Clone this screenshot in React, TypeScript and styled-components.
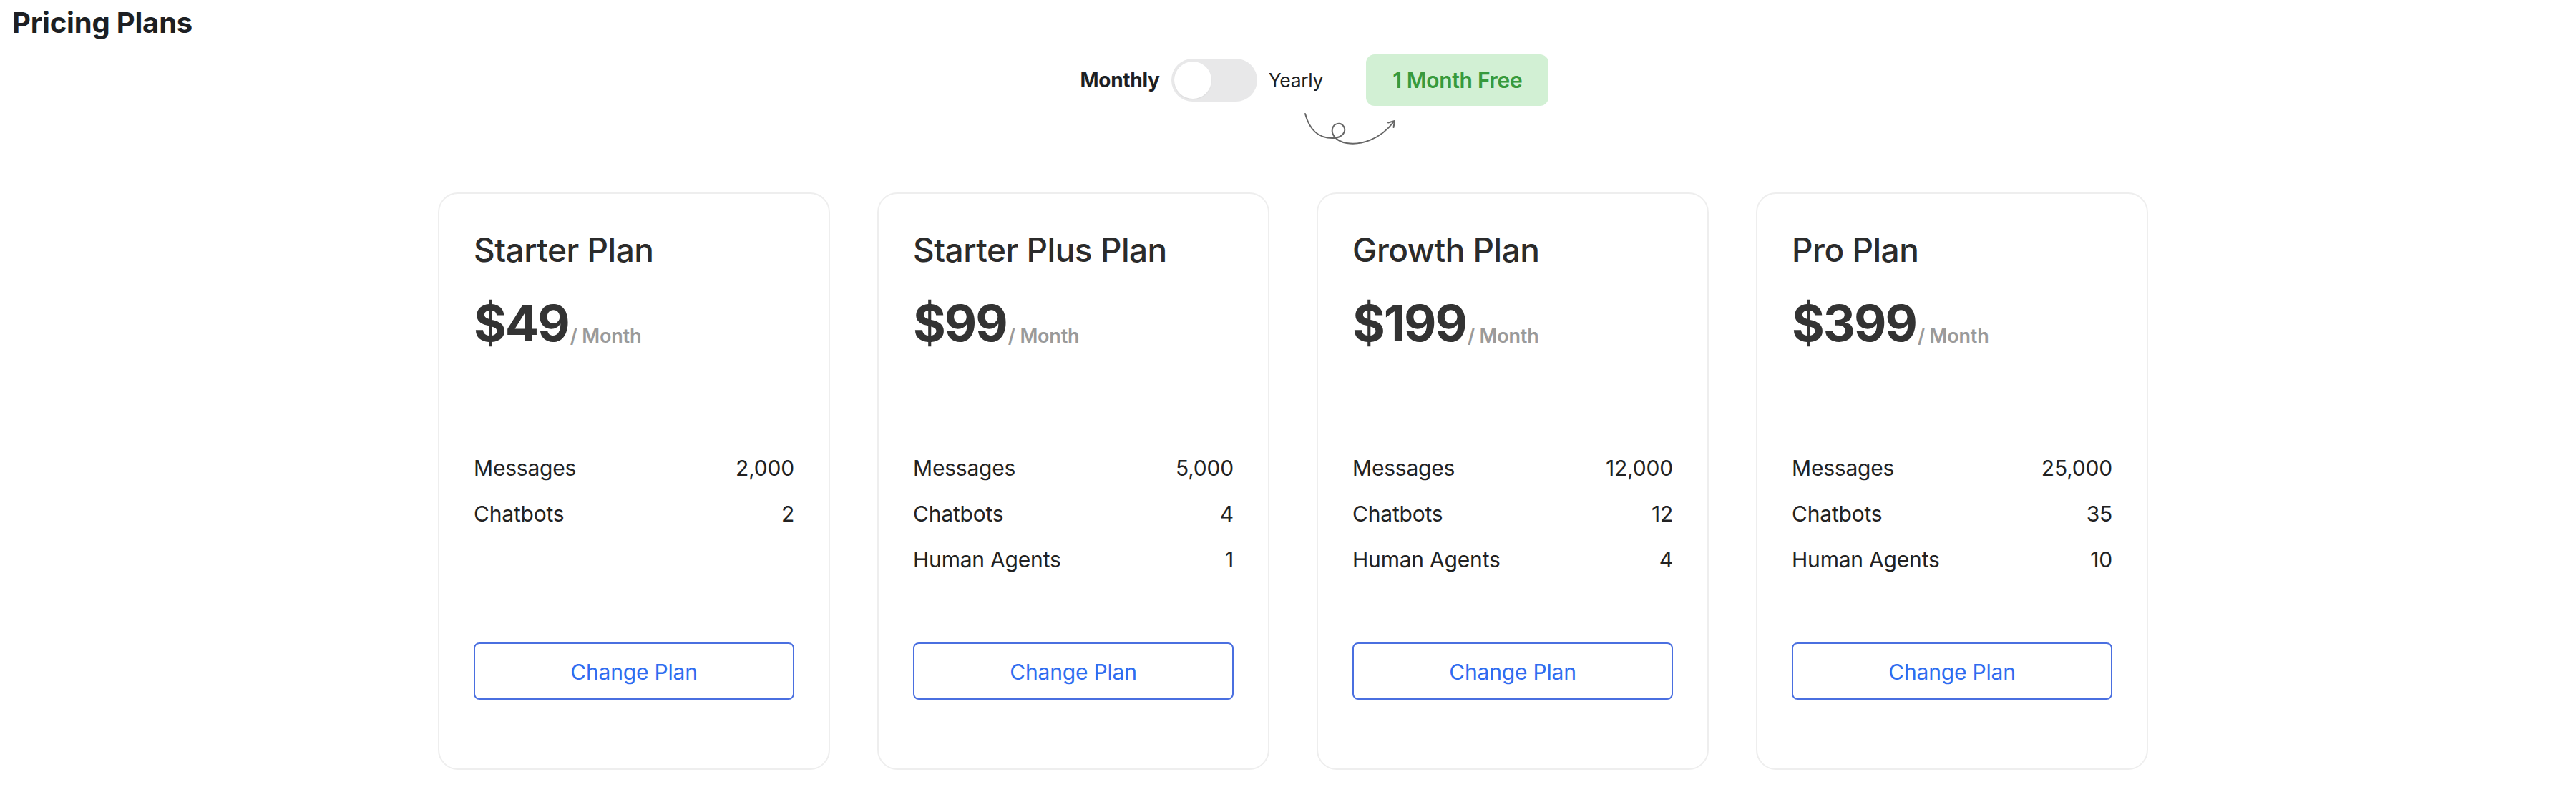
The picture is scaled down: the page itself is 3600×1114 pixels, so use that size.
import React from "react";
import styled, { createGlobalStyle } from "styled-components";

const GlobalStyle = createGlobalStyle`
  html, body {
    margin: 0;
    padding: 0;
    background: #ffffff;
    font-family: Inter, "Noto Sans", "Liberation Sans", sans-serif;
    color: #222222;
  }
  * { box-sizing: border-box; }
`;

const Page = styled.div`
  padding-top: 8px;
  width: 3600px;
`;

const Heading = styled.h1`
  margin: 0;
  padding-left: 17px;
  font-size: 40px;
  line-height: 48px;
  font-weight: 700;
  color: #1d1f23;
  letter-spacing: -0.2px;
`;

const BillingRow = styled.div`
  margin-top: 20px;
  display: flex;
  justify-content: center;
  padding-left: 74px;
`;

const BillingGroup = styled.div`
  position: relative;
  display: flex;
  align-items: center;
  height: 72px;
`;

const Label = styled.span<{ $active?: boolean }>`
  font-size: ${(p) => (p.$active ? "28px" : "26.5px")};
  font-weight: ${(p) => (p.$active ? 700 : 400)};
  color: #1d1f23;
  letter-spacing: ${(p) => (p.$active ? "-0.3px" : "-0.3px")};
`;

const Track = styled.button`
  width: 120px;
  height: 60px;
  margin: 0 16px;
  border: none;
  border-radius: 30px;
  background: #e8e8e9;
  padding: 4px;
  display: flex;
  align-items: center;
  cursor: pointer;
`;

const Knob = styled.span`
  width: 52px;
  height: 52px;
  border-radius: 50%;
  background: #ffffff;
  box-shadow: 0 1px 2px rgba(0, 0, 0, 0.06);
`;

const Badge = styled.div`
  margin-left: 60px;
  height: 72px;
  padding: 0 37px;
  border-radius: 12px;
  background: #d2f0d4;
  color: #379a3d;
  font-size: 30px;
  font-weight: 600;
  display: flex;
  align-items: center;
  letter-spacing: -0.3px;
`;

const Doodle = styled.svg`
  position: absolute;
  left: 306px;
  top: 76px;
  width: 140px;
  height: 56px;
  overflow: visible;
`;

const CardsRow = styled.div`
  margin-top: 121px;
  display: flex;
  justify-content: center;
  gap: 66px;
  padding-left: 14px;
`;

const Card = styled.div`
  width: 548px;
  height: 807px;
  border: 2px solid #eeeeee;
  border-radius: 28px;
  padding: 50px 48px 96px;
  display: flex;
  flex-direction: column;
  background: #ffffff;
`;

const PlanName = styled.h2`
  margin: 0;
  font-size: 46px;
  line-height: 56px;
  font-weight: 500;
  color: #2b2b2b;
  letter-spacing: -0.5px;
`;

const PriceLine = styled.div`
  margin-top: 33px;
  display: flex;
  align-items: baseline;
  height: 84px;
`;

const Price = styled.span`
  font-size: 70px;
  line-height: 84px;
  font-weight: 700;
  color: #333333;
  letter-spacing: -2px;
`;

const Period = styled.span`
  margin-left: 2px;
  font-size: 27px;
  font-weight: 600;
  color: #9a9a9a;
  letter-spacing: -0.2px;
  position: relative;
  top: 2px;
`;

const Features = styled.div`
  margin-top: 128px;
  min-height: 192px;
  display: flex;
  flex-direction: column;
`;

const FeatureRow = styled.div`
  height: 64px;
  display: flex;
  align-items: center;
  justify-content: space-between;
  font-size: 30px;
  color: #222222;
  letter-spacing: -0.2px;
`;

const ChangeButton = styled.button`
  margin-top: 84px;
  height: 80px;
  width: 100%;
  border: 2px solid #4a6fe0;
  border-radius: 8px;
  background: #ffffff;
  color: #2f6cf0;
  font-family: inherit;
  font-size: 30px;
  font-weight: 400;
  letter-spacing: -0.2px;
  padding-top: 3px;
  cursor: pointer;
`;

type Plan = {
  name: string;
  price: string;
  features: [string, string][];
};

const plans: Plan[] = [
  {
    name: "Starter Plan",
    price: "$49",
    features: [
      ["Messages", "2,000"],
      ["Chatbots", "2"],
    ],
  },
  {
    name: "Starter Plus Plan",
    price: "$99",
    features: [
      ["Messages", "5,000"],
      ["Chatbots", "4"],
      ["Human Agents", "1"],
    ],
  },
  {
    name: "Growth Plan",
    price: "$199",
    features: [
      ["Messages", "12,000"],
      ["Chatbots", "12"],
      ["Human Agents", "4"],
    ],
  },
  {
    name: "Pro Plan",
    price: "$399",
    features: [
      ["Messages", "25,000"],
      ["Chatbots", "35"],
      ["Human Agents", "10"],
    ],
  },
];

export default function App() {
  return (
    <Page>
      <GlobalStyle />
      <Heading>Pricing Plans</Heading>
      <BillingRow>
        <BillingGroup>
          <Label $active>Monthly</Label>
          <Track aria-label="Toggle billing period">
            <Knob />
          </Track>
          <Label>Yearly</Label>
          <Badge>1 Month Free</Badge>
          <Doodle viewBox="0 0 140 56" fill="none">
            <path
              d="M8 7 C14 30 28 42 48 41 C60 40 66 32 62 25 C58 18 48 20 46 28 C44 36 52 46 66 48 C85 51 112 44 132 18"
              stroke="#666666"
              strokeWidth="2"
              strokeLinecap="round"
              strokeLinejoin="round"
            />
            <path
              d="M124 19.5 L133 17 L131.5 26"
              stroke="#666666"
              strokeWidth="2"
              strokeLinecap="round"
              strokeLinejoin="round"
            />
          </Doodle>
        </BillingGroup>
      </BillingRow>
      <CardsRow>
        {plans.map((plan) => (
          <Card key={plan.name}>
            <PlanName>{plan.name}</PlanName>
            <PriceLine>
              <Price>{plan.price}</Price>
              <Period>/ Month</Period>
            </PriceLine>
            <Features>
              {plan.features.map(([label, value]) => (
                <FeatureRow key={label}>
                  <span>{label}</span>
                  <span>{value}</span>
                </FeatureRow>
              ))}
            </Features>
            <ChangeButton>Change Plan</ChangeButton>
          </Card>
        ))}
      </CardsRow>
    </Page>
  );
}
